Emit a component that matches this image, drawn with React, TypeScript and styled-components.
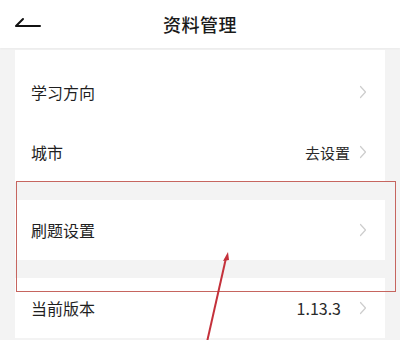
import React from 'react';
import styled, { createGlobalStyle } from 'styled-components';

const GlobalStyle = createGlobalStyle`
  html, body {
    margin: 0;
    padding: 0;
    background: #f3f3f3;
  }
  body {
    font-family: "Noto Sans CJK SC", "Noto Sans", sans-serif;
    color: #222;
  }
`;

const Page = styled.div`
  position: relative;
  width: 400px;
  height: 340px;
  overflow: hidden;
  background: #f3f3f3;
`;

const Header = styled.header`
  display: grid;
  grid-template-columns: 1fr auto 1fr;
  align-items: center;
  height: 48px;
  background: #ffffff;
  box-shadow: 0 1px 2px rgba(0, 0, 0, 0.04);
`;

const BackButton = styled.div`
  display: flex;
  align-items: center;
  padding-left: 14px;
  height: 48px;
`;

const Title = styled.h1`
  margin: 0;
  font-size: 18px;
  font-weight: 500;
  letter-spacing: 0.5px;
  color: #1a1a1a;
`;

const List = styled.div`
  display: flex;
  flex-direction: column;
  gap: 18px;
  padding: 2px 15px 0;
`;

const Card = styled.div<{ $top?: number }>`
  background: #ffffff;
  padding-top: ${(p) => p.$top ?? 0}px;
`;

const Row = styled.div`
  display: flex;
  align-items: center;
  height: 60px;
  padding: 0 18px 0 16px;
`;

const Label = styled.span`
  flex: 1;
  font-size: 16px;
  color: #1f1f1f;
`;

const Value = styled.span<{ $gap: number; $size: number }>`
  font-size: ${(p) => p.$size}px;
  color: #2a2a2a;
  margin-right: ${(p) => p.$gap}px;
`;

const Chevron = () => (
  <svg width="8" height="14" viewBox="0 0 8 14" fill="none">
    <path d="M1.5 1.5 L6.5 7 L1.5 12.5" stroke="#cdcdcd" strokeWidth="1.2" strokeLinecap="round" strokeLinejoin="round" />
  </svg>
);

const Highlight = styled.div`
  position: absolute;
  left: 16px;
  top: 181px;
  width: 378px;
  height: 109px;
  border: 1.5px solid #c6655f;
  pointer-events: none;
`;

const ArrowLayer = styled.svg`
  position: absolute;
  left: 0;
  top: 0;
  pointer-events: none;
`;

type Item = { label: string; value?: string; gap?: number; size?: number };

const SettingRow: React.FC<Item> = ({ label, value, gap = 9, size = 15 }) => (
  <Row>
    <Label>{label}</Label>
    {value && (
      <Value $gap={gap} $size={size}>
        {value}
      </Value>
    )}
    <Chevron />
  </Row>
);

export default function App() {
  return (
    <Page>
      <GlobalStyle />
      <Header>
        <BackButton>
          <svg width="28" height="14" viewBox="0 0 28 14" fill="none">
            <path d="M9 2 L2 9 L26 9" stroke="#111" strokeWidth="2" strokeLinecap="round" strokeLinejoin="round" />
          </svg>
        </BackButton>
        <Title>资料管理</Title>
        <div />
      </Header>
      <List>
        <Card $top={12}>
          <SettingRow label="学习方向" />
          <SettingRow label="城市" value="去设置" />
        </Card>
        <Card>
          <SettingRow label="刷题设置" />
        </Card>
        <Card>
          <SettingRow label="当前版本" value="1.13.3" gap={18} size={16} />
        </Card>
      </List>
      <Highlight />
      <ArrowLayer width="400" height="340" viewBox="0 0 400 340">
        <line x1="207" y1="342" x2="226" y2="258" stroke="#c4313b" strokeWidth="2" />
        <path d="M228 252 L223 261 L229 260 Z" fill="#c4313b" />
      </ArrowLayer>
    </Page>
  );
}
